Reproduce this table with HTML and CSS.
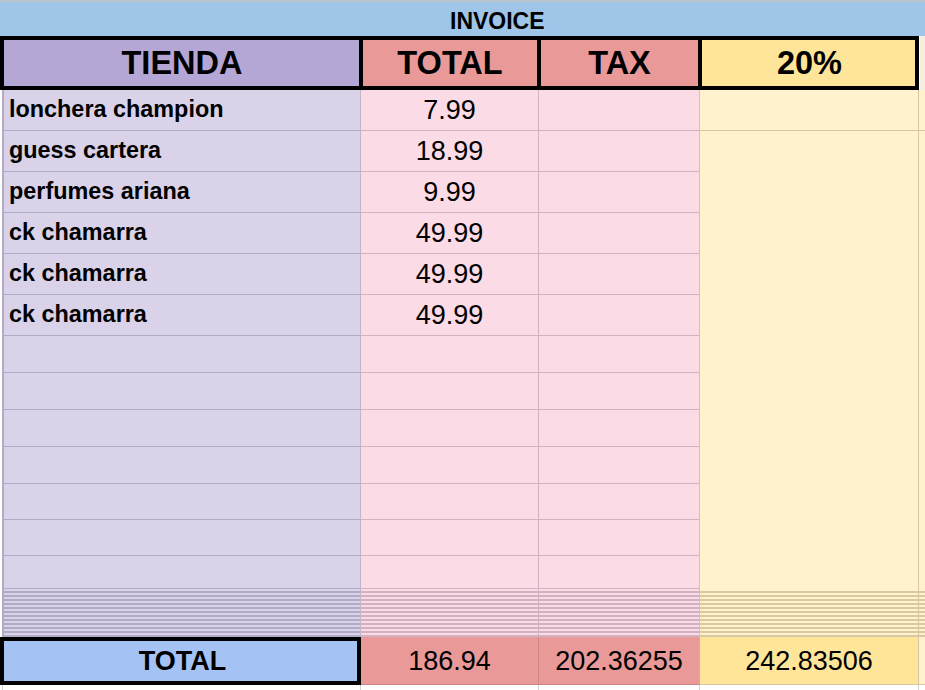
FILE: index.html
```html
<!DOCTYPE html>
<html lang="es">
<head>
<meta charset="utf-8">
<title>Invoice</title>
<link rel="stylesheet" href="styles.css">
</head>
<body>
<div class="topline"></div>
<div class="banner"><span class="banner-title">INVOICE</span></div>
<div class="sheet">
  <div class="hdr col-a">TIENDA</div>
  <div class="hdr col-b">TOTAL</div>
  <div class="hdr col-c">TAX</div>
  <div class="hdr col-d">20%</div>
  <div class="hdr col-e"></div>

  <div class="body col-a item">lonchera champion</div>
  <div class="body col-b num">7.99</div>
  <div class="body col-c"></div>
  <div class="body col-d"></div>
  <div class="body col-e"></div>

  <div class="body col-a item">guess cartera</div>
  <div class="body col-b num">18.99</div>
  <div class="body col-c"></div>
  <div class="merged col-d"></div>
  <div class="merged col-e"></div>

  <div class="body col-a item">perfumes ariana</div>
  <div class="body col-b num">9.99</div>
  <div class="body col-c"></div>

  <div class="body col-a item">ck chamarra</div>
  <div class="body col-b num">49.99</div>
  <div class="body col-c"></div>

  <div class="body col-a item">ck chamarra</div>
  <div class="body col-b num">49.99</div>
  <div class="body col-c"></div>

  <div class="body col-a item">ck chamarra</div>
  <div class="body col-b num">49.99</div>
  <div class="body col-c"></div>

  <div class="body col-a"></div><div class="body col-b"></div><div class="body col-c"></div>
  <div class="body col-a"></div><div class="body col-b"></div><div class="body col-c"></div>
  <div class="body col-a"></div><div class="body col-b"></div><div class="body col-c"></div>
  <div class="body col-a"></div><div class="body col-b"></div><div class="body col-c"></div>
  <div class="body col-a"></div><div class="body col-b"></div><div class="body col-c"></div>
  <div class="body col-a"></div><div class="body col-b"></div><div class="body col-c"></div>
  <div class="body col-a"></div><div class="body col-b"></div><div class="body col-c"></div>

  <div class="stripe col-a"></div>
  <div class="stripe col-b"></div>
  <div class="stripe col-c"></div>
  <div class="stripe col-d"></div>
  <div class="stripe col-e"></div>

  <div class="foot col-a label">TOTAL</div>
  <div class="foot col-b">186.94</div>
  <div class="foot col-c">202.36255</div>
  <div class="foot col-d">242.83506</div>
  <div class="foot col-e"></div>

  <div class="rest col-a"></div>
  <div class="rest col-b"></div>
  <div class="rest col-c"></div>
  <div class="rest col-d"></div>
  <div class="rest col-e"></div>
</div>
</body>
</html>
```

FILE: styles.css
```css
html, body {
  margin: 0;
  padding: 0;
  overflow: hidden;
  background: #ffffff;
  font-family: "Liberation Sans", Arial, sans-serif;
  color: #000000;
}

.topline {
  height: 2px;
  background: #b9c3cd;
}

.banner {
  height: 34px;
  background: #9fc5e8;
  display: flex;
  align-items: center;
  padding-left: 450px;
  padding-top: 3px;
  box-sizing: border-box;
}

.banner-title {
  font-weight: bold;
  font-size: 23px;
  line-height: 26px;
}

.sheet {
  display: grid;
  grid-template-columns: 361px 178px 161px 219px 1fr;
  grid-template-rows: 54px repeat(6, 41px) repeat(4, 37px) 36px 36px 33px 48px 48px 5px;
}

.sheet > div {
  display: flex;
  min-width: 0;
  box-sizing: border-box;
}

.col-a { grid-column: 1; }
.col-b { grid-column: 2; }
.col-c { grid-column: 3; }
.col-d { grid-column: 4; }
.col-e { grid-column: 5; }

/* header row */
.hdr {
  justify-content: center;
  align-items: center;
  font-weight: bold;
  font-size: 32.5px;
  line-height: 37px;
  border-top: 4px solid #000;
  border-bottom: 4px solid #000;
  box-shadow: inset 2px 0 0 #000, inset -2px 0 0 #000;
}
.hdr.col-a { background: #b4a7d6; box-shadow: inset 4px 0 0 #000, inset -2px 0 0 #000; padding-left: 3px; }
.hdr.col-b, .hdr.col-c { background: #ea9999; }
.hdr.col-d { background: #ffe599; box-shadow: inset 2px 0 0 #000, inset -4px 0 0 #000; }
.hdr.col-e {
  background: #f6efdf;
  border-top: none;
  border-bottom: none;
  box-shadow: none;
  border-left: 1px solid #ffffff;
}

/* body cells */
.body.col-a {
  background: #d9d2e9;
  margin-left: 2px;
  border-left: 2px solid #b3abc3;
  border-right: 1px solid #c4b4c8;
  border-bottom: 1px solid #b3abc3;
}
.body.col-b {
  background: #fbdbe6;
  border-right: 1px solid #d2b2c0;
  border-bottom: 1px solid #d2b2c0;
}
.body.col-c {
  background: #fbdbe6;
  border-right: 1px solid #d6c3aa;
  border-bottom: 1px solid #d2b2c0;
}
.body.col-d, .merged.col-d {
  background: #fff2cc;
  border-right: 1px solid #d8c7a0;
}
.body.col-d, .body.col-e {
  border-bottom: 1px solid #d8c7a0;
}
.body.col-e, .merged.col-e {
  background: #fff2cc;
}
.merged {
  grid-row: span 12;
}

.item {
  align-items: flex-end;
  font-weight: bold;
  font-size: 23.4px;
  line-height: 26px;
  padding: 0 0 8px 5px;
  white-space: nowrap;
}

.num {
  justify-content: center;
  align-items: flex-end;
  font-size: 27px;
  line-height: 30px;
  padding-bottom: 5px;
}

/* collapsed rows */
.stripe.col-a {
  margin-left: 2px;
  border-left: 2px solid #b3abc3;
  border-right: 1px solid #c4b4c8;
  background: repeating-linear-gradient(to bottom, #d9d2e9 0 2px, #b3abc3 2px 4px);
}
.stripe.col-b {
  border-right: 1px solid #d2b2c0;
  background: repeating-linear-gradient(to bottom, #fbdbe6 0 2px, #d2b2c0 2px 4px);
}
.stripe.col-c {
  border-right: 1px solid #d6c3aa;
  background: repeating-linear-gradient(to bottom, #fbdbe6 0 2px, #d2b2c0 2px 4px);
}
.stripe.col-d {
  border-right: 1px solid #d8c7a0;
  background: repeating-linear-gradient(to bottom, #fff2cc 0 2px, #d8c7a0 2px 4px);
}
.stripe.col-e {
  background: repeating-linear-gradient(to bottom, #fff2cc 0 2px, #d8c7a0 2px 4px);
}

/* total row */
.foot {
  justify-content: center;
  align-items: center;
  font-size: 27px;
  line-height: 30px;
}
.foot.label {
  font-weight: bold;
  background: #a4c2f4;
  border: 4px solid #000;
  padding-left: 4px;
}
.foot.col-b {
  background: #ea9999;
  border-right: 1px solid #c98787;
  border-bottom: 1px solid #c98787;
}
.foot.col-c {
  background: #ea9999;
  border-right: 1px solid #d4b08c;
  border-bottom: 1px solid #c98787;
}
.foot.col-d {
  background: #ffe599;
  border-right: 1px solid #d8c7a0;
  border-bottom: 1px solid #d8c7a0;
}
.foot.col-e {
  background: #fff2cc;
  border-bottom: 1px solid #d8c7a0;
}

/* area below the table */
.rest.col-a { border-right: 1px solid #d3d3d3; margin-left: 2px; border-left: 1px solid #d3d3d3; }
.rest.col-b, .rest.col-c, .rest.col-d { border-right: 1px solid #d3d3d3; }
```
